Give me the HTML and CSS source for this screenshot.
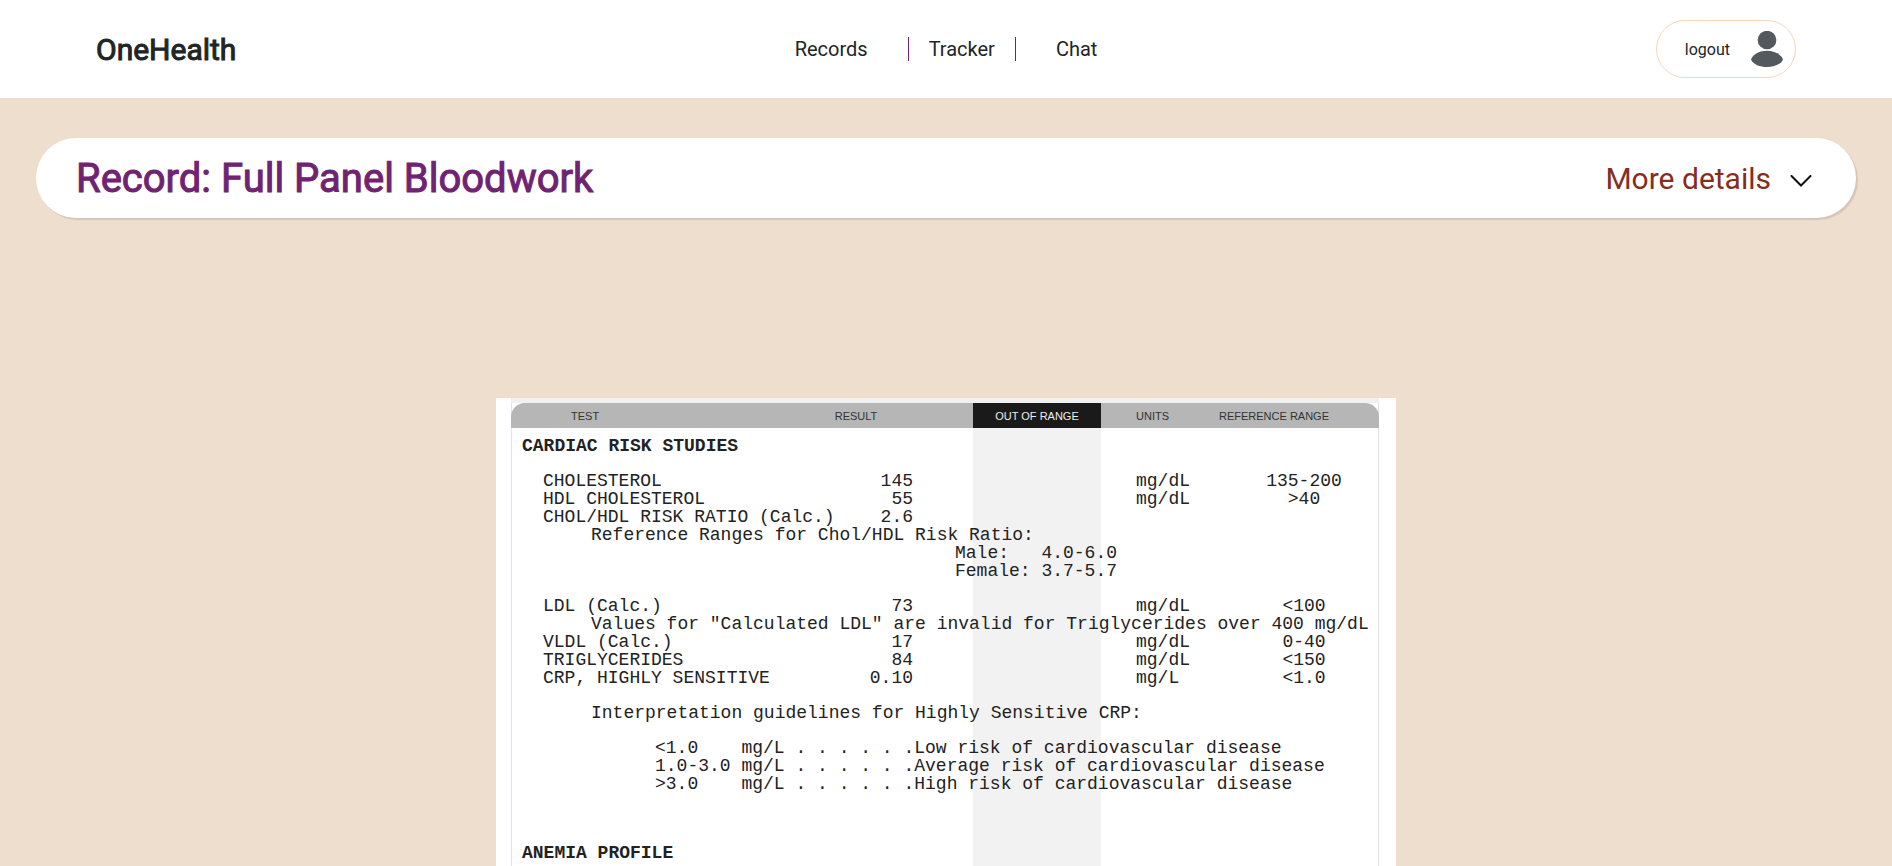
FILE: index.html
```html
<!DOCTYPE html>
<html lang="en">
<head>
<meta charset="utf-8">
<meta name="viewport" content="width=device-width, initial-scale=1">
<title>OneHealth</title>
<link rel="stylesheet" href="styles.css">
</head>
<body>
<header class="site-header">
  <a class="brand" href="#">OneHealth</a>
  <nav class="main-nav">
    <a class="nav-link" href="#">Records</a>
    <a class="nav-link nav-link-middle" href="#">Tracker</a>
    <a class="nav-link" href="#">Chat</a>
  </nav>
  <button class="logout" type="button">
    <span>logout</span>
    <svg class="avatar" viewBox="0 0 32 36" aria-hidden="true">
      <ellipse cx="16" cy="9" rx="9.400" ry="9.200"/>
      <path d="M0 28.500C2 23 9 19.800 16 19.800S30 23 32 28.500C30 33.500 23 36 16 36S2 33.500 0 28.500Z"/>
    </svg>
  </button>
</header>
<main class="record">
  <section class="record-bar">
    <h1 class="record-title">Record: Full Panel Bloodwork</h1>
    <button class="details" type="button">
      <span>More details</span>
      <svg class="chevron" viewBox="0 0 22 12" aria-hidden="true"><path d="M1.500 1L11 10.500L20.500 1"/></svg>
    </button>
  </section>
  <article class="document">
    <table class="report">
      <colgroup>
        <col class="col-test"><col class="col-result"><col class="col-range"><col class="col-units"><col class="col-reference">
      </colgroup>
      <thead>
        <tr><th class="test">TEST</th><th class="result">RESULT</th><th class="range">OUT OF RANGE</th><th class="units">UNITS</th><th class="reference">REFERENCE RANGE</th></tr>
      </thead>
      <tbody class="title-group">
        <tr><th colspan="5">CARDIAC RISK STUDIES</th></tr>
      </tbody>
      <tbody class="group">
        <tr><td class="test">CHOLESTEROL</td><td class="result">145</td><td></td><td class="units">mg/dL</td><td class="reference">135-200</td></tr>
        <tr><td class="test">HDL CHOLESTEROL</td><td class="result">55</td><td></td><td class="units">mg/dL</td><td class="reference">&gt;40</td></tr>
        <tr><td class="test">CHOL/HDL RISK RATIO (Calc.)</td><td class="result">2.6</td><td></td><td></td><td></td></tr>
        <tr><td class="note" colspan="5">Reference Ranges for Chol/HDL Risk Ratio:</td></tr>
        <tr><td class="ratio" colspan="5">Male:   4.0-6.0</td></tr>
        <tr><td class="ratio" colspan="5">Female: 3.7-5.7</td></tr>
      </tbody>
      <tbody class="group">
        <tr><td class="test">LDL (Calc.)</td><td class="result">73</td><td></td><td class="units">mg/dL</td><td class="reference">&lt;100</td></tr>
        <tr><td class="note" colspan="5">Values for "Calculated LDL" are invalid for Triglycerides over 400 mg/dL</td></tr>
        <tr><td class="test">VLDL (Calc.)</td><td class="result">17</td><td></td><td class="units">mg/dL</td><td class="reference">0-40</td></tr>
        <tr><td class="test">TRIGLYCERIDES</td><td class="result">84</td><td></td><td class="units">mg/dL</td><td class="reference">&lt;150</td></tr>
        <tr><td class="test">CRP, HIGHLY SENSITIVE</td><td class="result">0.10</td><td></td><td class="units">mg/L</td><td class="reference">&lt;1.0</td></tr>
      </tbody>
      <tbody class="group">
        <tr><td class="note" colspan="5">Interpretation guidelines for Highly Sensitive CRP:</td></tr>
      </tbody>
      <tbody class="group">
        <tr><td class="guide" colspan="5">&lt;1.0    mg/L . . . . . .Low risk of cardiovascular disease</td></tr>
        <tr><td class="guide" colspan="5">1.0-3.0 mg/L . . . . . .Average risk of cardiovascular disease</td></tr>
        <tr><td class="guide" colspan="5">&gt;3.0    mg/L . . . . . .High risk of cardiovascular disease</td></tr>
      </tbody>
      <tbody class="title-group next-panel">
        <tr><th colspan="5">ANEMIA PROFILE</th></tr>
      </tbody>
    </table>
  </article>
</main>
</body>
</html>
```
FILE: styles.css
```css
* {
  box-sizing: border-box;
}

body {
  display: flex;
  flex-direction: column;
  height: 100vh;
  margin: 0;
  overflow: hidden;
  background: #eddece;
  color: #212525;
  font-family: Roboto, "Liberation Sans", sans-serif;
}

a {
  color: inherit;
  text-decoration: none;
}

button {
  border: 0;
  background: none;
  font-family: inherit;
  cursor: pointer;
}

.site-header {
  display: grid;
  grid-template-columns: 1fr auto 1fr;
  align-items: center;
  flex: none;
  padding: 20px 96px;
  background: #fff;
}

.brand {
  justify-self: start;
  font-size: 30px;
  -webkit-text-stroke: 1px currentColor;
}

.main-nav {
  display: flex;
}

.nav-link {
  padding: 0 40px;
  font-size: 20px;
  line-height: 24px;
}

.nav-link-middle {
  padding: 0 20px;
  border: solid #6f2372;
  border-width: 0 1px;
}

.logout {
  display: flex;
  align-items: center;
  justify-self: end;
  gap: 21px;
  height: 58px;
  padding: 0 12px 0 28px;
  border: 1px solid #f5d7bd;
  border-radius: 29px;
  color: #212525;
  font-size: 16px;
}

.avatar {
  width: 32px;
  height: 36px;
  fill: #54595d;
}

.record {
  display: flex;
  flex: 1;
  flex-direction: column;
  min-height: 0;
  padding: 40px 36px 0;
}

.record-bar {
  display: flex;
  align-items: center;
  justify-content: space-between;
  flex: none;
  height: 80px;
  padding: 0 44px 0 40px;
  border-radius: 40px;
  background: #fff;
  box-shadow: 2px 2px 1px #d6c6b8;
}

.record-title {
  margin: 0;
  color: #6f2372;
  font-size: 40px;
  font-weight: 400;
  -webkit-text-stroke: 1px currentColor;
}

.details {
  display: flex;
  align-items: center;
  gap: 19px;
  padding: 0;
  color: #862d1e;
  font-size: 30px;
}

.chevron {
  width: 22px;
  height: 12px;
  margin-top: 6px;
  fill: none;
  stroke: #111;
  stroke-width: 2;
  stroke-linecap: round;
}

.document {
  align-self: center;
  flex: 1;
  width: 900px;
  max-width: 100%;
  min-height: 0;
  margin-top: 180px;
  padding: 0 17px 0 15px;
  overflow: hidden;
  background: #fff;
}

.report {
  width: 100%;
  border-top: 5px solid #f1f1f1;
  border-spacing: 0;
  table-layout: fixed;
  background: linear-gradient(90deg, #e2e2e2 1px, transparent 1px 462px, #f2f2f2 462px 590px, transparent 590px 867px, #e2e2e2 867px);
  color: #222;
  font-family: "Liberation Mono", monospace;
  font-size: 18px;
  line-height: 18px;
  white-space: pre;
}

.col-test { width: 284px; }
.col-result { width: 178px; }
.col-range { width: 128px; }
.col-units { width: 118px; }
.col-reference { width: 160px; }

.report th,
.report td {
  padding: 0;
  text-align: left;
}

.report thead th {
  height: 25px;
  background: #b6b6b6;
  color: #333;
  font-family: "Liberation Sans", sans-serif;
  font-size: 11px;
  font-weight: 400;
  -webkit-text-stroke: 0;
}

.report thead .test {
  padding-left: 60px;
  border-top-left-radius: 14px;
}

.report thead .result {
  padding-right: 56px;
  text-align: center;
}

.report thead .range {
  background: #1a1a1a;
  color: #eee;
  text-align: center;
}

.report .units {
  padding-left: 35px;
}

.report thead .reference {
  border-top-right-radius: 14px;
}

.report td.test { padding-left: 32px; }

.report td.result {
  padding-right: 60px;
  text-align: right;
}

.report td.reference {
  padding-left: 10px;
  text-align: center;
}

.report .note { padding-left: 80px; }
.report .ratio { padding-left: 444px; }
.report .guide { padding-left: 144px; }

.report .title-group th { padding: 9px 0 0 11px; }
.report .group tr:first-child td { padding-top: 17px; }
.report .next-panel th { padding: 51px 0 40px 11px; }
```
